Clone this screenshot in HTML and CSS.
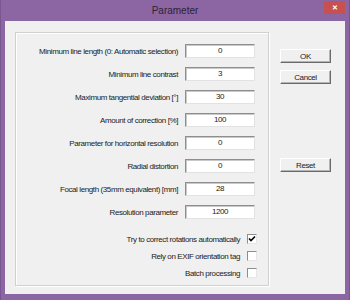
FILE: index.html
```html
<!DOCTYPE html>
<html lang="en">
<head>
  <meta charset="UTF-8" />
  <title>Parameter</title>
  <link rel="stylesheet" href="styles.css">
</head>
<body>
  <div class="window">
    <div class="titlebar">
      <span class="title">Parameter</span>
      <span class="close">&#x2715;</span>
    </div>
    <div class="client">
      <div class="group">
        <div class="fields">
          <label>Minimum line length (0: Automatic selection)</label><div class="edit">0</div>
          <label>Minimum line contrast</label><div class="edit">3</div>
          <label>Maximum tangential deviation [&deg;]</label><div class="edit">30</div>
          <label>Amount of correction [%]</label><div class="edit">100</div>
          <label>Parameter for horizontal resolution</label><div class="edit">0</div>
          <label>Radial distortion</label><div class="edit">0</div>
          <label>Focal length (35mm equivalent) [mm]</label><div class="edit">28</div>
          <label>Resolution parameter</label><div class="edit">1200</div>
        </div>
        <div class="checks">
          <div class="check-row">
            <span>Try to correct rotations automatically</span>
            <span class="box">
              <svg width="8" height="8" viewBox="0 0 8 8"><path d="M1 3.5 L3 5.5 L7 1.5" fill="none" stroke="#000" stroke-width="1.6"/></svg>
            </span>
          </div>
          <div class="check-row">
            <span>Rely on EXIF orientation tag</span>
            <span class="box"></span>
          </div>
          <div class="check-row">
            <span>Batch processing</span>
            <span class="box"></span>
          </div>
        </div>
      </div>
      <div class="buttons">
        <button>OK</button>
        <button>Cancel</button>
        <button class="reset">Reset</button>
      </div>
    </div>
  </div>
</body>
</html>
```

FILE: styles.css
```css
body {
  margin: 0;
  font-family: 'Liberation Sans', Arial, sans-serif;
}
.window {
  width: 350px;
  height: 300px;
  box-sizing: border-box;
  background: #8c66a2;
  border-left: 1px solid #7a5690;
  border-right: 1px solid #7a5690;
  padding: 0 4px 6px 4px;
  display: flex;
  flex-direction: column;
}
.titlebar {
  height: 21px;
  position: relative;
  display: flex;
  align-items: center;
  justify-content: center;
}
.title {
  font-size: 10px;
  color: #2e2238;
  margin-top: -1px;
}
.close {
  position: absolute;
  right: 0;
  top: 1px;
  width: 21px;
  height: 13px;
  background: #c75050;
  color: #fff;
  font-size: 7px;
  font-weight: bold;
  display: flex;
  align-items: center;
  justify-content: center;
}
.client {
  flex: 1;
  background: #f0f0f0;
  display: flex;
  align-items: flex-start;
  padding: 11px 0 0 10px;
  font-size: 8px;
  letter-spacing: -0.4px;
  color: #222;
}
.group {
  width: 254px;
  height: 254px;
  box-sizing: border-box;
  border: 1px solid #d0d0d0;
  box-shadow: inset 1px 1px #fff, 1px 1px #fff;
  padding: 11px 13px 0 0;
}
.fields {
  display: grid;
  grid-template-columns: 1fr 70px;
  column-gap: 7px;
  row-gap: 9px;
  align-items: center;
}
.fields label {
  text-align: right;
  white-space: nowrap;
}
.edit {
  height: 14px;
  box-sizing: border-box;
  background: #fff;
  border: 1px solid;
  border-color: #8e8e8e #e2e2e2 #e2e2e2 #8e8e8e;
  box-shadow: inset 1px 1px #c9c9c9;
  text-align: center;
  line-height: 11px;
}
.checks {
  margin-top: 15px;
  margin-right: -2px;
  display: flex;
  flex-direction: column;
  gap: 7px;
}
.check-row {
  height: 10px;
  display: flex;
  justify-content: flex-end;
  align-items: center;
  gap: 7px;
}
.box {
  width: 10px;
  height: 10px;
  box-sizing: border-box;
  background: #fff;
  border: 1px solid;
  border-color: #8e8e8e #e6e6e6 #e6e6e6 #8e8e8e;
  display: flex;
  align-items: center;
  justify-content: center;
}
.buttons {
  margin-left: 11px;
  padding-top: 17px;
  width: 51px;
  display: flex;
  flex-direction: column;
  gap: 7px;
}
button {
  height: 14px;
  padding: 0;
  font-family: inherit;
  font-size: 8px;
  letter-spacing: -0.4px;
  color: #222;
  background: #f0f0f0;
  border: 1px solid;
  border-color: #fff #6a6a6a #6a6a6a #fff;
  box-shadow: inset -1px -1px #b4b4b4;
}
.reset {
  margin-top: 67px;
}
```
